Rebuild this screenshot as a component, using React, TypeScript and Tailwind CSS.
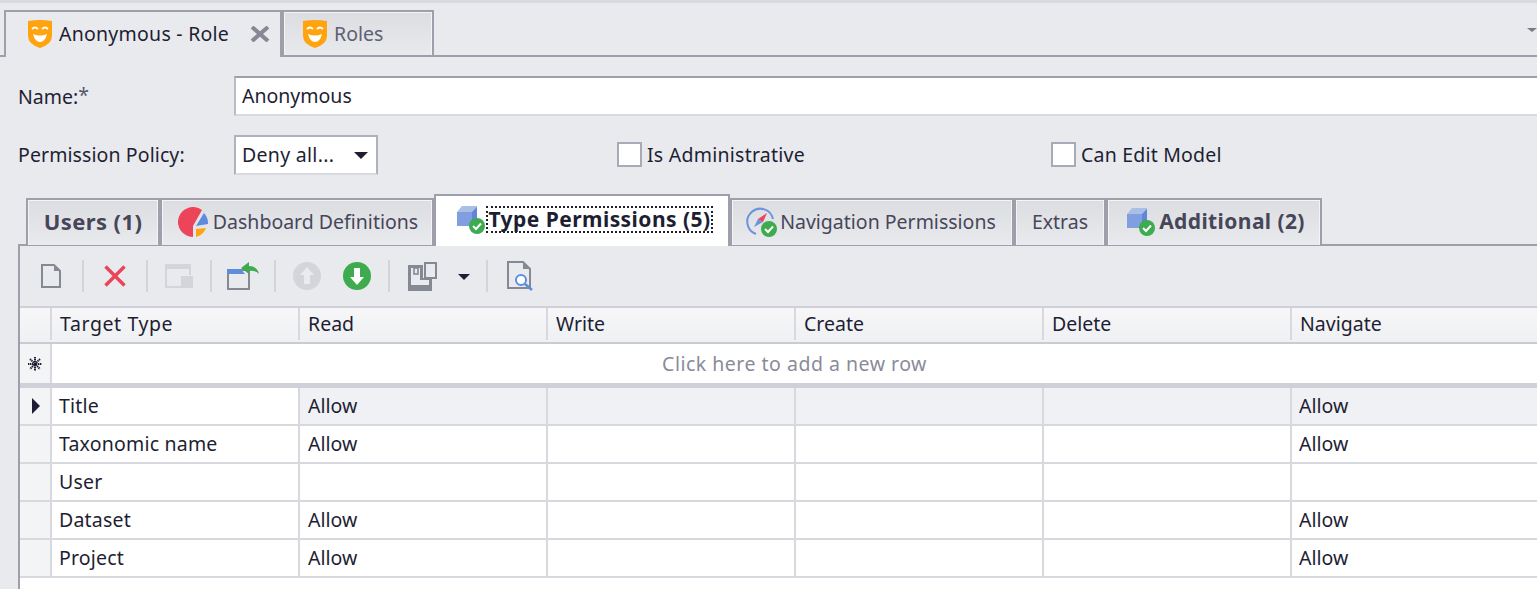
import type { ReactNode } from 'react';

const columns = ['Read', 'Write', 'Create', 'Delete'];

const rows = [
  { name: 'Title', read: 'Allow', nav: 'Allow' },
  { name: 'Taxonomic name', read: 'Allow', nav: 'Allow' },
  { name: 'User', read: '', nav: '' },
  { name: 'Dataset', read: 'Allow', nav: 'Allow' },
  { name: 'Project', read: 'Allow', nav: 'Allow' },
];

function Mask() {
  return (
    <svg width="24" height="28" viewBox="0 0 24 28">
      <path d="M0 1 Q12 -1 24 1 V16 Q24 24 12 28 Q0 24 0 16 Z" fill="#ffa30f" />
      <path d="M4 9 Q7 6 10 9 M14 9 Q17 6 20 9" stroke="#fff" strokeWidth="1.8" fill="none" />
      <path d="M5 14 Q12 17 19 14 Q17 22 12 22 Q7 22 5 14 Z" fill="#fff" />
    </svg>
  );
}

function Check({ x, y }: { x: number; y: number }) {
  return (
    <g transform={`translate(${x} ${y})`}>
      <circle cx="8" cy="8" r="8" fill="#3dab4e" />
      <path d="M4 8 L7 11 L12 5.5" stroke="#fff" strokeWidth="2" fill="none" />
    </g>
  );
}

function Cube() {
  return (
    <svg width="29" height="28" viewBox="0 0 29 28">
      <path d="M0 6 L5 0 H20 V5 L15 6 Z" fill="#a9bfe6" />
      <path d="M0 6 H15 V20 H0 Z" fill="#7f9fe0" />
      <path d="M15 6 L20 1 V14 L15 20 Z" fill="#6285d6" />
      <Check x={12} y={12} />
    </svg>
  );
}

function Pie() {
  return (
    <svg width="30" height="30" viewBox="0 0 30 30">
      <path d="M24 3 A15 15 0 1 0 15 30 V19 L24 3 Z" fill="#ec4459" />
      <path d="M26 6 A15 15 0 0 1 30 17 L18 19 Z" fill="#608bdc" />
      <path d="M18 22 L28 21 A15 15 0 0 1 18 30 Z" fill="#ffa30f" />
    </svg>
  );
}

function Compass() {
  return (
    <svg width="32" height="30" viewBox="0 0 32 30">
      <path d="M11 27 A13 13 0 1 1 28 12" stroke="#6a94dd" strokeWidth="2" fill="none" />
      <path d="M9 20 L13 12 L18 15 Z" fill="#6a94dd" />
      <path d="M13 12 L22 6 L18 15 Z" fill="#ec4459" />
      <Check x={16} y={14} />
    </svg>
  );
}

function Tool({ children, sep }: { children: ReactNode; sep?: boolean }) {
  return (
    <div className="flex h-full items-center">
      {children}
      {sep && <div className="h-[32px] w-[2px] bg-[#d3d4da]" />}
    </div>
  );
}

function Toolbar() {
  return (
    <div className="flex h-[60px] items-center pl-[21px]">
      <Tool sep>
        <div className="flex w-[41px] justify-start">
          <svg width="20" height="24" viewBox="0 0 20 24">
            <path d="M1 1 H13 L19 7 V23 H1 Z" fill="none" stroke="#858993" strokeWidth="2" />
            <path d="M13 1 L19 7 H13 Z" fill="#858993" />
          </svg>
        </div>
      </Tool>
      <Tool sep>
        <div className="flex w-[62px] justify-center">
          <svg width="24" height="24" viewBox="0 0 24 24">
            <path d="M2.5 2.5 L21.5 21.5 M21.5 2.5 L2.5 21.5" stroke="#ea4458" strokeWidth="3.4" />
          </svg>
        </div>
      </Tool>
      <Tool sep>
        <div className="flex w-[62px] justify-center">
          <svg width="28" height="24" viewBox="0 0 28 24">
            <path d="M0 0 H26 V5 H0 Z" fill="#d4d5da" />
            <path d="M1 5 V23 H16 M25 5 V11" stroke="#d4d5da" strokeWidth="2" fill="none" />
            <rect x="16" y="12" width="12" height="12" fill="#d4d5da" />
          </svg>
        </div>
      </Tool>
      <Tool sep>
        <div className="flex w-[62px] justify-center">
          <svg width="32" height="28" viewBox="0 0 32 28">
            <path d="M1 8 H22 V27 H1 Z" fill="none" stroke="#858993" strokeWidth="2" />
            <path d="M0 7 H14 L18 12 H0 Z" fill="#5e8ddc" />
            <path d="M14 6 L22 0 V4 Q30 4 32 12 Q28 8 22 9 V12 Z" fill="#3dab4e" />
          </svg>
        </div>
      </Tool>
      <Tool>
        <div className="flex w-[62px] justify-center">
          <svg width="28" height="28" viewBox="0 0 28 28">
            <circle cx="14" cy="14" r="14" fill="#d4d5da" />
            <path d="M14 5 L21 13 H17 V22 H11 V13 H7 Z" fill="#eaebef" />
          </svg>
        </div>
      </Tool>
      <Tool sep>
        <div className="flex w-[50px] justify-start pl-[5px]">
          <svg width="28" height="28" viewBox="0 0 28 28">
            <circle cx="14" cy="14" r="14" fill="#3dab4e" />
            <path d="M14 23 L21 15 H17 V6 H11 V15 H7 Z" fill="#fff" />
          </svg>
        </div>
      </Tool>
      <Tool>
        <div className="flex w-[68px] justify-start pl-[18px]">
          <svg width="29" height="29" viewBox="0 0 29 29">
            <path d="M0 3 H15 V16 H24 V29 H0 Z M3 6 V23 H21 V18 H12 V6 Z" fill="#858993" fillRule="evenodd" />
            <rect x="6" y="6" width="4" height="6" fill="none" stroke="#858993" strokeWidth="1.6" />
            <rect x="17" y="1" width="11" height="15" fill="none" stroke="#858993" strokeWidth="2" />
          </svg>
        </div>
      </Tool>
      <Tool sep>
        <div className="flex w-[28px] justify-start">
          <div className="mt-px h-0 w-0 border-x-[6px] border-t-[6px] border-x-transparent border-t-[#1f1f33]" />
        </div>
      </Tool>
      <Tool>
        <div className="pl-[19px]">
          <svg width="27" height="30" viewBox="0 0 27 30">
            <path d="M1 1 H16 L23 8 V27 H1 Z" fill="none" stroke="#858993" strokeWidth="2" />
            <path d="M16 1 L23 8 H16 Z" fill="#858993" />
            <circle cx="14" cy="19" r="5" fill="#fff" stroke="#5e8ddc" strokeWidth="2" />
            <path d="M18 23 L25 29" stroke="#5e8ddc" strokeWidth="2.6" />
          </svg>
        </div>
      </Tool>
    </div>
  );
}

function InnerTab({
  children,
  width,
  className,
}: {
  children: ReactNode;
  width: string;
  className?: string;
}) {
  return (
    <div
      className={`-mb-px flex h-[47px] items-center justify-center gap-[3px] border-x-2 border-t-2 border-b-0 border-[#9e9fab] bg-gradient-to-b from-[#dcdde1] to-[#e9eaee] text-[#474659] shadow-[inset_1px_1px_0_#f4f4f6,inset_-1px_0_0_#f4f4f6] ${width} ${className ?? ''}`}
    >
      {children}
    </div>
  );
}

function Cell({ children, width, className }: { children?: ReactNode; width: string; className?: string }) {
  return (
    <div className={`flex h-full shrink-0 items-center border-r-2 border-[#d8d9df] pl-[7px] ${width} ${className ?? ''}`}>
      {children}
    </div>
  );
}

export default function App() {
  return (
    <div
      className="h-[589px] w-[1537px] overflow-hidden border-t-[3px] border-[#d9dae0] bg-[#e9eaee] text-[19.5px] leading-none text-[#1e1e33]"
      style={{ fontFamily: '"Noto Sans", "Open Sans", sans-serif' }}
    >
      {/* document tabs */}
      <div className="relative flex h-[54px] items-end border-b-2 border-[#9e9fab] pl-[4px]">
        <div className="-mb-[2px] flex h-[47px] w-[278px] items-center border-x-2 border-t-2 border-[#9e9fab] bg-[#e9eaee] pb-[2px] pl-[22px]">
          <Mask />
          <span className="ml-[7px] w-[191px] whitespace-nowrap tracking-[0.25px]">Anonymous - Role</span>
          <svg width="20" height="16" viewBox="0 0 20 16">
            <path d="M2 1 L18 15 M18 1 L2 15" stroke="#878893" strokeWidth="4" />
          </svg>
        </div>
        <div className="-mb-[2px] flex h-[47px] w-[152px] items-center border-x-2 border-y-2 border-[#9e9fab] bg-gradient-to-b from-[#dcdde1] to-[#e9eaee] pl-[19px] text-[#5f6071] shadow-[inset_1px_1px_0_#f4f4f6,inset_-1px_0_0_#f4f4f6]">
          <Mask />
          <span className="ml-[7px]">Roles</span>
        </div>
        <div className="absolute top-[25px] right-0 h-0 w-0 border-x-[5px] border-t-[4px] border-x-transparent border-t-[#7a7a88]" />
      </div>

      {/* form */}
      <div className="flex h-[59px] items-end pl-[18px]">
        <div className="flex h-[40px] w-[216px] items-center pt-[2px]">
          Name:<span className="-mt-1 text-[#55566a]">*</span>
        </div>
        <div className="flex h-[40px] flex-1 items-center border-t-2 border-b-2 border-l-2 border-t-[#9e9fab] border-b-[#d9dae0] border-l-[#b9bac4] bg-white pl-[6px]">
          Anonymous
        </div>
      </div>
      <div className="flex h-[59px] items-end pl-[18px]">
        <div className="flex h-[40px] w-[216px] items-center tracking-[0.1px]">Permission Policy:</div>
        <div className="flex h-[40px] w-[144px] items-center justify-between border-2 border-[#b0b1bc] border-b-[#d9dae0] bg-white pr-[8px] pl-[6px] tracking-[0.3px]">
          Deny all...
          <div className="h-0 w-0 border-x-[7px] border-t-[7px] border-x-transparent border-t-[#1e1e33]" />
        </div>
        <div className="ml-[239px] flex h-[40px] w-[434px] items-center gap-[5px] pb-[2px]">
          <div className="h-[25px] w-[25px] border-2 border-[#a9aab5] bg-white" />
          <span className="pt-[2px] tracking-[0.25px]">Is Administrative</span>
        </div>
        <div className="flex h-[40px] items-center gap-[5px] pb-[2px]">
          <div className="h-[25px] w-[25px] border-2 border-[#a9aab5] bg-white" />
          <span className="pt-[2px] tracking-[0.2px]">Can Edit Model</span>
        </div>
      </div>

      {/* detail tabs */}
      <div className="flex h-[69px] items-end pl-[26px]">
        <InnerTab width="w-[134px]" className="pb-[3px] text-[22px] font-bold tracking-[0.4px]">
          Users (1)
        </InnerTab>
        <InnerTab width="w-[274px]" className="pb-[2px] pl-[2px]">
          <Pie />
          <span className="ml-[2px]">Dashboard Definitions</span>
        </InnerTab>
        <div className="relative z-10 -mb-[2px] flex h-[52px] w-[296px] items-center justify-center border-x-2 border-t-2 border-b-0 border-[#9e9fab] bg-white pb-[3px] pl-[6px] text-[21px] font-bold tracking-[0.45px]">
          <Cube />
          <span className="border-2 border-dotted border-[#1e1e33] leading-[23px]">Type Permissions (5)</span>
        </div>
        <InnerTab width="w-[284px]" className="pb-[2px] pr-[3px]">
          <Compass />
          <span>Navigation Permissions</span>
        </InnerTab>
        <InnerTab width="w-[92px]" className="pb-[2px]">
          Extras
        </InnerTab>
        <InnerTab width="w-[216px]" className="pb-[2px] pl-[4px] text-[21px] font-bold tracking-[0.4px]">
          <Cube />
          <span>Additional (2)</span>
        </InnerTab>
      </div>

      {/* panel */}
      <div className="ml-[18px] h-[346px] border-t-[2px] border-l-[2px] border-[#9e9fab]">
        <Toolbar />

        {/* grid */}
        <div className="border-t-2 border-[#d0d1d8]">
          <div className="flex h-[36px] border-b-2 border-[#c9cad2] bg-gradient-to-b from-[#f7f7f9] to-[#eff0f3] pb-[2px]">
            <Cell width="w-[32px]" />
            <Cell width="w-[248px]" className="pl-[8px] tracking-[0.6px]">
              Target Type
            </Cell>
            {columns.map((c) => (
              <Cell key={c} width="w-[248px]" className="pl-[8px]">
                {c}
              </Cell>
            ))}
            <Cell width="flex-1" className="border-r-0! pl-[8px]">
              Navigate
            </Cell>
          </div>
          <div className="flex h-[44px] border-b-[5px] border-[#d0d1d8] bg-white">
            <div className="flex h-full w-[32px] shrink-0 items-center justify-center border-r-2 border-[#d8d9df] bg-[#f3f4f6]">
              <svg width="14" height="14" viewBox="0 0 14 14">
                <path
                  d="M7 0 V14 M0 7 H14 M2 2 L12 12 M12 2 L2 12"
                  stroke="#1e1e33"
                  strokeWidth="2"
                  strokeDasharray="1.4 0.6"
                />
              </svg>
            </div>
            <div className="flex flex-1 items-center justify-center tracking-[0.5px] text-[#8a8b99]">
              Click here to add a new row
            </div>
          </div>
          {rows.map((r, i) => (
            <div key={r.name} className="flex h-[38px] border-b-2 border-[#d8d9df] bg-white">
              <div className="flex h-full w-[32px] shrink-0 items-center justify-center border-r-2 border-[#d8d9df] bg-[#f3f4f6] pl-[2px]">
                {i === 0 && (
                  <div className="h-0 w-0 border-y-[8px] border-l-[8px] border-y-transparent border-l-[#1e1e33]" />
                )}
              </div>
              <Cell width="w-[248px]" className="tracking-[0.2px]">
                {r.name}
              </Cell>
              <Cell width="w-[248px]" className={i === 0 ? 'bg-[#f0f1f4] pl-[8px]' : 'pl-[8px]'}>
                {r.read}
              </Cell>
              <Cell width="w-[248px]" className={i === 0 ? 'bg-[#f0f1f4]' : ''} />
              <Cell width="w-[248px]" className={i === 0 ? 'bg-[#f0f1f4]' : ''} />
              <Cell width="w-[248px]" className={i === 0 ? 'bg-[#f0f1f4]' : ''} />
              <Cell width="flex-1" className={i === 0 ? 'border-r-0! bg-[#f0f1f4]' : 'border-r-0!'}>
                {r.nav}
              </Cell>
            </div>
          ))}
          <div className="h-[12px] bg-white" />
        </div>
      </div>
    </div>
  );
}
